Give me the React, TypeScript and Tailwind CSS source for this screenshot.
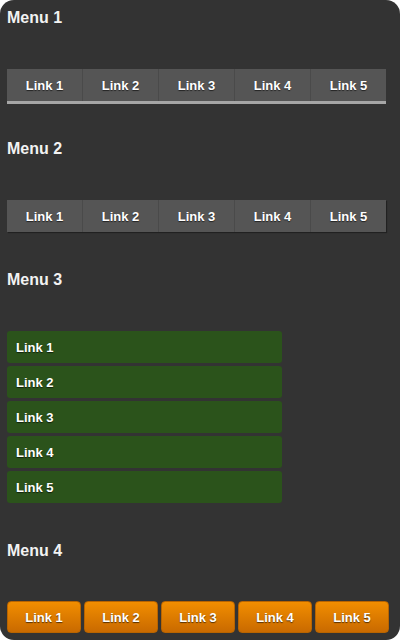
import React from "react";

const links = ["Link 1", "Link 2", "Link 3", "Link 4", "Link 5"];
const ts = "[text-shadow:0_1px_1px_rgba(0,0,0,0.6)]";

function Heading({ children, className = "" }: { children: React.ReactNode; className?: string }) {
  return (
    <h2 className={`text-[16px] leading-[20px] font-bold text-[#f2f2f2] ${className}`}>{children}</h2>
  );
}

export default function App() {
  return (
    <div className="w-[400px] h-[640px] bg-white" style={{ fontFamily: '"Liberation Sans", Arial, sans-serif' }}>
      <div className="w-[400px] h-[640px] bg-[#333333] rounded-[14px] overflow-hidden px-[7px] pt-[8px]">
        <Heading>Menu 1</Heading>
        <div className="mt-[41px] w-[379px] flex bg-[#555555] border-b-[3px] border-[#a6a6a6]">
          {links.map((l, i) => (
            <div
              key={l}
              className={`flex-1 h-[32px] pt-[2px] flex items-center justify-center text-[13px] font-bold text-white ${ts} ${i < 4 ? "border-r border-[#4a4a4a]" : ""}`}
            >
              {l}
            </div>
          ))}
        </div>

        <Heading className="mt-[35px]">Menu 2</Heading>
        <div className="mt-[41px] w-[379px] flex bg-[#555555] shadow-[1px_1px_1px_rgba(0,0,0,0.35)]">
          {links.map((l, i) => (
            <div
              key={l}
              className={`flex-1 h-[32px] pt-[2px] flex items-center justify-center text-[13px] font-bold text-white ${ts} ${i < 4 ? "border-r border-[#4a4a4a]" : ""}`}
            >
              {l}
            </div>
          ))}
        </div>

        <Heading className="mt-[38px]">Menu 3</Heading>
        <div className="mt-[41px] w-[275px] flex flex-col gap-[3px]">
          {links.map((l) => (
            <div
              key={l}
              className={`h-[32px] pt-[2px] flex items-center pl-[9px] rounded-[3px] bg-[#2b531b] text-[13px] font-bold text-white ${ts}`}
            >
              {l}
            </div>
          ))}
        </div>

        <Heading className="mt-[38px]">Menu 4</Heading>
        <div className="mt-[40px] w-[382px] flex gap-[3px]">
          {links.map((l) => (
            <div
              key={l}
              className={`flex-1 h-[32px] pt-[2px] flex items-center justify-center rounded-[4px] border border-[#b86400] bg-gradient-to-b from-[#f28e00] to-[#c96a00] text-[13px] font-bold text-white ${ts}`}
            >
              {l}
            </div>
          ))}
        </div>
      </div>
    </div>
  );
}
